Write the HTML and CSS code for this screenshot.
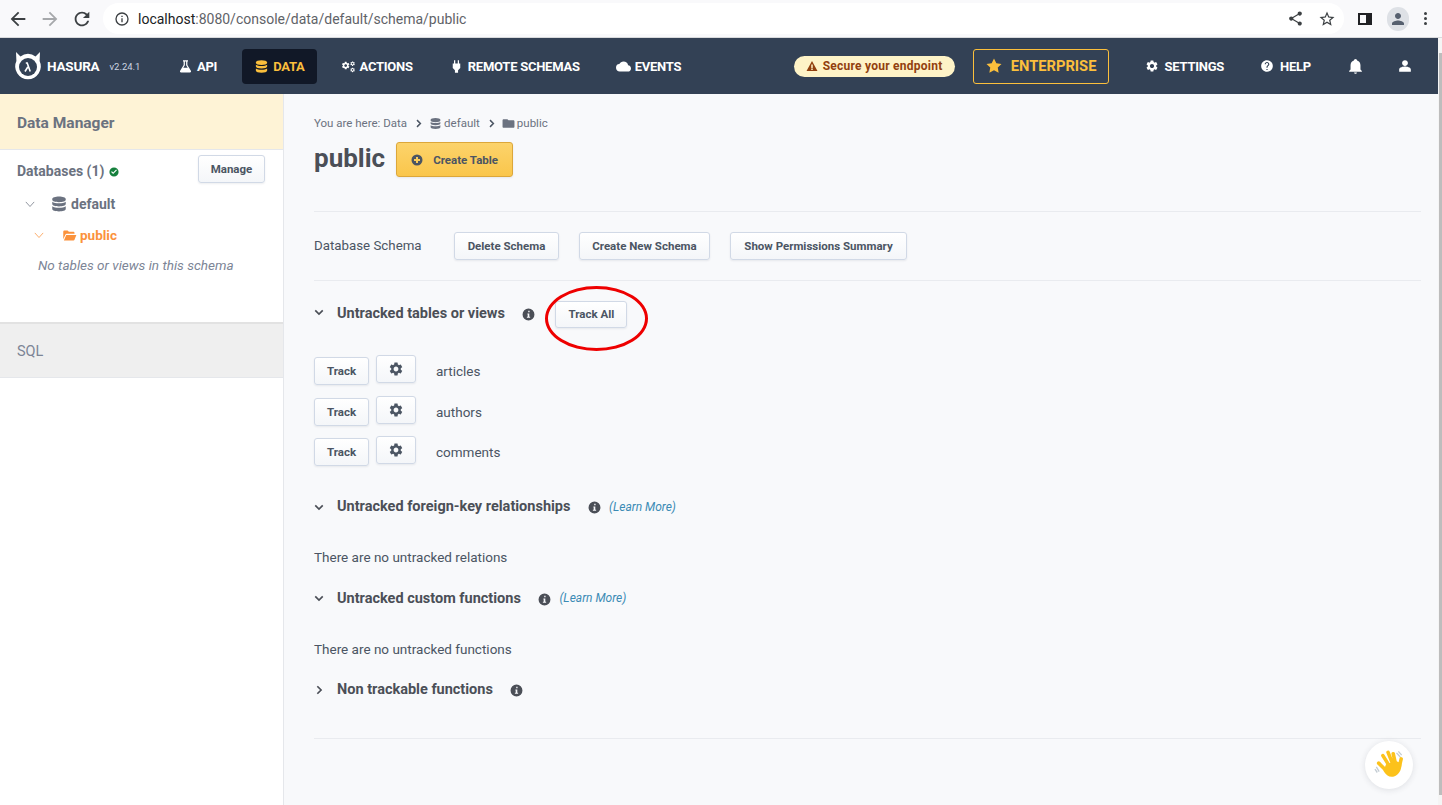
FILE: index.html
```html
<!DOCTYPE html>
<html lang="en">
<head>
    <meta charset="UTF-8">
    <title>Hasura Console</title>
    <link rel="stylesheet" href="styles.css">
</head>
<body>
    <svg class="sprites" width="0" height="0">
        <symbol id="i-db" viewBox="0 0 24 24"><path d="M12 2c-5 0-9 1.300-9 3.200v1.200C3 8.300 7 9.600 12 9.600s9-1.300 9-3.200V5.200C21 3.300 17 2 12 2zM3 9v3c0 1.900 4 3.200 9 3.200s9-1.300 9-3.200V9c-1.800 1.400-5.300 2-9 2s-7.200-.6-9-2zM3 15v3.800C3 20.700 7 22 12 22s9-1.300 9-3.200V15c-1.800 1.400-5.300 2-9 2s-7.200-.6-9-2z"/></symbol>
        <symbol id="i-gear" viewBox="0 0 24 24"><path d="M19.140 12.940c.040-.300.060-.610.060-.940 0-.320-.020-.640-.070-.940l2.030-1.580a.49.49 0 0 0 .120-.610l-1.920-3.320a.488.488 0 0 0-.590-.220l-2.390.960c-.5-.380-1.030-.7-1.620-.940l-.360-2.540a.484.484 0 0 0-.480-.410h-3.840c-.240 0-.430.170-.470.410l-.360 2.540c-.590.240-1.130.570-1.620.940l-2.390-.960c-.220-.080-.470 0-.590.220L2.740 8.870c-.120.210-.080.470.120.610l2.030 1.580c-.050.300-.090.630-.090.940s.020.640.070.940l-2.030 1.580a.49.49 0 0 0-.12.61l1.920 3.320c.120.220.370.290.590.220l2.390-.96c.5.38 1.030.7 1.620.94l.36 2.54c.05.24.24.41.48.41h3.840c.24 0 .44-.17.47-.41l.36-2.54c.59-.24 1.130-.56 1.620-.94l2.39.96c.22.08.47 0 .59-.22l1.920-3.320c.12-.22.07-.47-.12-.61l-2.010-1.580zM12 15.600c-1.980 0-3.600-1.620-3.600-3.600s1.620-3.600 3.600-3.600 3.600 1.620 3.600 3.600-1.620 3.600-3.600 3.600z"/></symbol>
        <symbol id="i-info" viewBox="0 0 24 24"><path fill-rule="evenodd" d="M12 1a11 11 0 1 0 0 22 11 11 0 0 0 0-22zm-2 9h3.500v6H15v2H9v-2h1.500v-4H10zm1.500-5h2.500v3h-2.500z"/></symbol>
        <symbol id="i-down" viewBox="0 0 24 24"><path d="M3 8l9 9 9-9" fill="none" stroke="currentColor" stroke-width="4"/></symbol>
        <symbol id="i-thin" viewBox="0 0 24 24"><path d="M2 7l10 11L22 7" fill="none" stroke="currentColor" stroke-width="1.800"/></symbol>
    </svg>

    <div class="browser-bar">
        <svg class="b-icon" viewBox="0 0 24 24"><path d="M20 11H7.830l5.590-5.590L12 4l-8 8 8 8 1.410-1.410L7.830 13H20z"/></svg>
        <svg class="b-icon b-off" viewBox="0 0 24 24"><path d="M4 11h12.170l-5.590-5.590L12 4l8 8-8 8-1.410-1.410L16.170 13H4z"/></svg>
        <svg class="b-icon" viewBox="0 0 24 24"><path d="M17.650 6.350A7.958 7.958 0 0 0 12 4c-4.420 0-7.990 3.580-7.990 8s3.570 8 7.990 8c3.730 0 6.840-2.550 7.730-6h-2.080A5.990 5.990 0 0 1 12 18c-3.310 0-6-2.690-6-6s2.690-6 6-6c1.660 0 3.140.690 4.220 1.780L13 11h7V4z"/></svg>
        <div class="url-box">
            <svg class="url-info" viewBox="0 0 24 24"><path fill-rule="evenodd" d="M12 2a10 10 0 1 0 0 20 10 10 0 0 0 0-20zm0 2a8 8 0 1 1 0 16 8 8 0 0 1 0-16zm-1 3h2v2h-2zm0 4h2v6h-2z"/></svg>
            <span class="url-host">localhost</span><span class="url-rest">:8080/console/data/default/schema/public</span>
            <svg class="url-end share" viewBox="0 0 24 24"><path d="M18 16.080c-.760 0-1.440.300-1.960.770L8.910 12.700c.050-.230.090-.460.090-.700s-.040-.470-.090-.700l7.050-4.110c.540.500 1.250.810 2.040.810 1.660 0 3-1.340 3-3s-1.340-3-3-3-3 1.340-3 3c0 .240.040.470.090.700L8.040 9.810C7.500 9.310 6.790 9 6 9c-1.660 0-3 1.340-3 3s1.340 3 3 3c.790 0 1.500-.310 2.040-.810l7.120 4.160c-.050.210-.080.430-.080.650 0 1.610 1.310 2.920 2.920 2.920s2.920-1.310 2.920-2.920-1.310-2.920-2.920-2.920z"/></svg>
            <svg class="url-end" viewBox="0 0 24 24"><path d="M22 9.240l-7.190-.620L12 2 9.190 8.630 2 9.240l5.460 4.730L5.820 21 12 17.270 18.180 21l-1.630-7.030L22 9.240zM12 15.400l-3.760 2.270 1-4.280-3.320-2.880 4.380-.380L12 6.100l1.710 4.040 4.380.380-3.320 2.880 1 4.280L12 15.400z"/></svg>
        </div>
        <svg class="side-panel" viewBox="0 0 16 16"><path fill-rule="evenodd" d="M1 2h14v12H1zm2 2v8h6V4z"/></svg>
        <div class="avatar"><svg viewBox="0 0 24 24"><path d="M12 12c2.200 0 4-1.800 4-4s-1.800-4-4-4-4 1.800-4 4 1.800 4 4 4zm0 2c-2.700 0-8 1.300-8 4v2h16v-2c0-2.700-5.300-4-8-4z"/></svg></div>
        <div class="dots"><span></span><span></span><span></span></div>
    </div>

    <div class="frame">
        <div class="app">
            <nav class="top-nav">
                <div class="brand">
                    <svg class="logo" viewBox="0 0 28 30">
                        <path d="M2 1l4.500 4.500a12 12 0 0 1 15 0L26 1l-.4 9a12.800 12.800 0 1 1-23.200 0z" fill="#fff"/>
                        <circle cx="14" cy="16" r="9" fill="#334155"/>
                        <path d="M11 20.500l2.800-4.500M11.800 12h1.400l3 8.500" fill="none" stroke="#fff" stroke-width="1.600"/>
                    </svg>
                    <span class="brand-name">HASURA</span>
                    <span class="brand-version">v2.24.1</span>
                </div>
                <a class="nav-item"><svg viewBox="0 0 24 24"><path d="M8 2h8v2h-1v5.500l5.600 9.300c.7 1.200-.1 2.700-1.500 2.700H4.900c-1.400 0-2.200-1.500-1.500-2.700L9 9.500V4H8zm3 2v6l-2.500 4h7L13 10V4z" fill-rule="evenodd"/></svg>API</a>
                <a class="nav-item active"><svg viewBox="0 0 24 24"><use href="#i-db"/></svg>DATA</a>
                <a class="nav-item"><svg viewBox="0 0 24 24"><use href="#i-gear" x="0" y="3" width="15" height="15"/><use href="#i-gear" x="14" y="3" width="9" height="9"/><use href="#i-gear" x="14" y="13" width="9" height="9"/></svg>ACTIONS</a>
                <a class="nav-item"><svg viewBox="0 0 24 24"><path d="M16 7V2h-2v5h-4V2H8v5H6v7.500L9.500 18v4h5v-4l3.500-3.500V7z"/></svg>REMOTE SCHEMAS</a>
                <a class="nav-item"><svg viewBox="0 0 24 24"><path d="M19.350 10.040A7.490 7.490 0 0 0 12 4C9.110 4 6.600 5.640 5.350 8.040A5.994 5.994 0 0 0 0 14c0 3.310 2.690 6 6 6h13c2.760 0 5-2.240 5-5 0-2.640-2.050-4.780-4.650-4.960z"/></svg>EVENTS</a>

                <div class="nav-right">
                    <div class="secure-pill">
                        <svg viewBox="0 0 24 24"><path fill-rule="evenodd" d="M12 2L1 22h22zm-1.500 7h3v7h-3zm0 8h3v3h-3z"/></svg>
                        Secure your endpoint
                    </div>
                    <a class="enterprise"><svg viewBox="0 0 24 24"><path d="M12 2l3.090 6.260L22 9.270l-5 4.870 1.180 6.880L12 17.770l-6.180 3.250L7 14.140 2 9.270l6.910-1.010z"/></svg>ENTERPRISE</a>
                    <a class="nav-link settings"><svg viewBox="0 0 24 24"><use href="#i-gear"/></svg>SETTINGS</a>
                    <a class="nav-link help"><svg viewBox="0 0 24 24"><path d="M12 2C6.480 2 2 6.480 2 12s4.480 10 10 10 10-4.480 10-10S17.520 2 12 2zm1 17h-2v-2h2v2zm2.070-7.750l-.9.920C13.450 12.900 13 13.500 13 15h-2v-.5c0-1.100.450-2.100 1.170-2.830l1.240-1.260c.370-.360.590-.860.590-1.410 0-1.100-.9-2-2-2s-2 .9-2 2H8c0-2.210 1.790-4 4-4s4 1.790 4 4c0 .880-.360 1.680-.930 2.250z"/></svg>HELP</a>
                    <svg class="bell" viewBox="0 0 24 24"><path d="M12 23c1.100 0 2-.9 2-2h-4c0 1.100.9 2 2 2zm7-6v-6c0-3.070-1.630-5.640-4.500-6.320V4c0-.830-1.670-2-2.500-2s-2.500 1.170-2.500 2v.680C6.640 5.360 5 7.920 5 11v6l-2 2v1h18v-1z"/></svg>
                    <svg class="user" viewBox="0 0 24 24"><path d="M12 12c2.800 0 5-2.200 5-5s-2.200-5-5-5-5 2.200-5 5 2.200 5 5 5zm0 1c-3 0-10 1.300-10 5v4h20v-4c0-3.700-7-5-10-5z"/></svg>
                </div>
            </nav>

            <div class="page">
                <aside class="sidebar">
                    <div class="side-head">Data Manager</div>
                    <div class="side-body">
                        <div class="db-row">
                            <span class="db-title">Databases (1)</span>
                            <svg class="ok-icon" viewBox="0 0 24 24"><path fill-rule="evenodd" d="M12 1a11 11 0 1 0 0 22 11 11 0 0 0 0-22zm-2 16l-5-5 2-2 3 3 7-7 2 2z"/></svg>
                            <button class="btn btn-manage">Manage</button>
                        </div>
                        <div class="tree-row tree-default">
                            <svg class="thin" viewBox="0 0 24 24"><use href="#i-thin"/></svg>
                            <svg class="db-icon" viewBox="0 0 24 24"><use href="#i-db"/></svg>
                            default
                        </div>
                        <div class="tree-row tree-public">
                            <svg class="thin" viewBox="0 0 24 24"><use href="#i-thin"/></svg>
                            <svg class="folder" viewBox="0 0 24 24"><path d="M2 18V6c0-1.100.9-2 2-2h5l2 2h7c1.100 0 2 .9 2 2v1H7.500c-.9 0-1.600.5-1.900 1.300zM6.800 11H23l-3.200 8.200c-.2.5-.7.8-1.300.8H3z"/></svg>
                            public
                        </div>
                        <div class="tree-empty">No tables or views in this schema</div>
                    </div>
                    <div class="side-sql">SQL</div>
                </aside>

                <main class="content">
                    <div class="crumbs">
                        You are here: Data
                        <svg class="crumb-sep" viewBox="0 0 24 24"><use href="#i-down"/></svg>
                        <svg class="crumb-icon" viewBox="0 0 24 24"><use href="#i-db"/></svg>
                        default
                        <svg class="crumb-sep" viewBox="0 0 24 24"><use href="#i-down"/></svg>
                        <svg class="crumb-icon" viewBox="0 0 24 24"><path d="M10 4H3c-1.100 0-2 .9-2 2v12c0 1.100.9 2 2 2h18c1.100 0 2-.9 2-2V8c0-1.100-.9-2-2-2h-9z"/></svg>
                        public
                    </div>
                    <div class="title-row">
                        <h1>public</h1>
                        <button class="btn btn-create">
                            <svg viewBox="0 0 24 24"><path fill-rule="evenodd" d="M12 1a11 11 0 1 0 0 22 11 11 0 0 0 0-22zm-2 5h4v4h4v4h-4v4h-4v-4H6v-4h4z"/></svg>
                            Create Table
                        </button>
                    </div>
                    <hr class="rule rule-top">
                    <div class="schema-row">
                        <span class="schema-label">Database Schema</span>
                        <button class="btn btn-delete">Delete Schema</button>
                        <button class="btn btn-new">Create New Schema</button>
                        <button class="btn btn-perm">Show Permissions Summary</button>
                    </div>
                    <hr class="rule rule-mid">

                    <div class="section-head first">
                        <svg class="chev" viewBox="0 0 24 24"><use href="#i-down"/></svg>
                        <h2>Untracked tables or views</h2>
                        <svg class="info" viewBox="0 0 24 24"><use href="#i-info"/></svg>
                        <span class="track-all-wrap">
                            <button class="btn btn-track-all">Track All</button>
                            <span class="red-circle"></span>
                        </span>
                    </div>
                    <div class="table-list">
                        <div class="table-row">
                            <button class="btn btn-track">Track</button>
                            <button class="btn btn-gear"><svg viewBox="0 0 24 24"><use href="#i-gear"/></svg></button>
                            <span class="table-name">articles</span>
                        </div>
                        <div class="table-row">
                            <button class="btn btn-track">Track</button>
                            <button class="btn btn-gear"><svg viewBox="0 0 24 24"><use href="#i-gear"/></svg></button>
                            <span class="table-name">authors</span>
                        </div>
                        <div class="table-row">
                            <button class="btn btn-track">Track</button>
                            <button class="btn btn-gear"><svg viewBox="0 0 24 24"><use href="#i-gear"/></svg></button>
                            <span class="table-name">comments</span>
                        </div>
                    </div>

                    <div class="section-head fk">
                        <svg class="chev" viewBox="0 0 24 24"><use href="#i-down"/></svg>
                        <h2>Untracked foreign-key relationships</h2>
                        <svg class="info" viewBox="0 0 24 24"><use href="#i-info"/></svg>
                        <a class="learn">(Learn More)</a>
                    </div>
                    <p class="none-text">There are no untracked relations</p>

                    <div class="section-head">
                        <svg class="chev" viewBox="0 0 24 24"><use href="#i-down"/></svg>
                        <h2>Untracked custom functions</h2>
                        <svg class="info" viewBox="0 0 24 24"><use href="#i-info"/></svg>
                        <a class="learn">(Learn More)</a>
                    </div>
                    <p class="none-text">There are no untracked functions</p>

                    <div class="section-head">
                        <svg class="chev chev-right" viewBox="0 0 24 24"><use href="#i-down"/></svg>
                        <h2>Non trackable functions</h2>
                        <svg class="info" viewBox="0 0 24 24"><use href="#i-info"/></svg>
                    </div>
                    <hr class="rule rule-end">
                </main>
            </div>
        </div>
        <div class="scroll-track"><div class="scroll-thumb"></div></div>
    </div>

    <div class="wave-btn">
        <svg viewBox="0 0 32 32">
            <path d="M2.500 18l3 5M1 20.500l2.500 3.500M24 3l4 4.500M26 1.500l3.500 4" fill="none" stroke="#c3ccd3" stroke-width="1.400"/>
            <path d="M5 14l9 9M9.500 6l7.500 12M15 2.500l5 12.500M20.500 4l2.500 11M29 9.500l-2 8.500" fill="none" stroke="#fcc21b" stroke-width="3.800" stroke-linecap="round"/>
            <path d="M13 15l11-3 5 2c1 6-2 12-7 14-5 2-9-1-12-6z" fill="#fcc21b"/>
        </svg>
    </div>
</body>
</html>
```

FILE: styles.css
```css
* {
    box-sizing: border-box;
}
html, body {
    height: 100%;
}
body {
    margin: 0;
    height: 805px;
    overflow: hidden;
    display: flex;
    flex-direction: column;
    font-family: Roboto, Arial, sans-serif;
    font-size: 14px;
    color: #4b5563;
    background: #fff;
}
.sprites {
    position: absolute;
}
svg {
    fill: currentColor;
    flex: none;
    display: block;
}

/* browser chrome */
.browser-bar {
    height: 38px;
    flex: none;
    display: flex;
    align-items: center;
    padding: 3px 0 3px 7px;
    background: #f9f9fb;
    border-bottom: 1px solid #d9dadc;
}
.b-icon {
    width: 22px;
    height: 22px;
    margin-right: 10px;
    color: #3c4043;
}
.b-off {
    color: #a6a8ab;
}
.url-box {
    width: 1241px;
    height: 31px;
    border-radius: 16px;
    background: #fff;
    display: flex;
    align-items: center;
    padding: 0 8px 0 11px;
    font-size: 14px;
}
.url-info {
    width: 16px;
    height: 16px;
    margin-right: 8px;
    color: #3c4043;
}
.url-host {
    color: #202124;
}
.url-rest {
    color: #5f6368;
}
.url-end {
    width: 18px;
    height: 18px;
    color: #3c4043;
}
.share {
    margin-left: auto;
    margin-right: 14px;
    width: 17px;
    height: 17px;
}
.side-panel {
    width: 16px;
    height: 16px;
    margin-left: 13px;
    color: #202124;
}
.avatar {
    width: 22px;
    height: 24px;
    margin-left: 14px;
    border-radius: 11px;
    background: #dee1e6;
    display: flex;
    align-items: center;
    justify-content: center;
    color: #56606f;
}
.avatar svg {
    width: 18px;
    height: 18px;
}
.dots {
    margin-left: 15px;
    display: flex;
    flex-direction: column;
    gap: 2px;
}
.dots span {
    width: 3px;
    height: 3px;
    border-radius: 50%;
    background: #3c4043;
}

/* app frame with its scrollbar */
.frame {
    flex: 1;
    display: flex;
    min-height: 0;
}
.app {
    flex: 1;
    min-width: 0;
    display: flex;
    flex-direction: column;
}
.scroll-track {
    width: 4px;
    flex: none;
    padding: 15px 0 10px 1px;
    background: #f5f5f5;
}
.scroll-thumb {
    height: 100%;
    background: #bdbdbd;
}

/* top navigation */
.top-nav {
    height: 56px;
    flex: none;
    display: flex;
    align-items: center;
    gap: 12px;
    padding-left: 14px;
    padding-right: 26px;
    background: #334155;
    color: #fff;
}
.brand {
    width: 140px;
    display: flex;
    align-items: center;
}
.logo {
    width: 28px;
    height: 30px;
}
.brand-name {
    margin-left: 5px;
    font-size: 13.500px;
    font-weight: 700;
    letter-spacing: -.2px;
}
.brand-version {
    margin-left: 10px;
    font-size: 9.500px;
    color: #cbd5e1;
}
.nav-item {
    height: 35px;
    display: flex;
    align-items: center;
    gap: 4px;
    padding: 0 12px;
    border-radius: 4px;
    font-size: 13px;
    font-weight: 700;
    letter-spacing: -.25px;
}
.nav-item svg {
    width: 15px;
    height: 15px;
}
.nav-item.active {
    margin-left: 1px;
    background: #111827;
    color: #fbbf3c;
}
.nav-right {
    margin-left: auto;
    display: flex;
    align-items: center;
}
.secure-pill {
    width: 161px;
    height: 21px;
    display: flex;
    align-items: center;
    justify-content: center;
    gap: 5px;
    border-radius: 11px;
    background: #fef3c7;
    color: #92400e;
    font-size: 12px;
    font-weight: 700;
    letter-spacing: .25px;
}
.secure-pill svg {
    width: 12px;
    height: 12px;
}
.enterprise {
    margin-left: 18px;
    width: 136px;
    height: 35px;
    display: flex;
    align-items: center;
    justify-content: center;
    gap: 8px;
    border: 1px solid #fbbf3c;
    border-radius: 3px;
    color: #fbbf3c;
    font-size: 14.700px;
    font-weight: 700;
}
.enterprise svg {
    width: 18px;
    height: 18px;
}
.nav-link {
    display: flex;
    align-items: center;
    gap: 6px;
    font-size: 13px;
    font-weight: 700;
    letter-spacing: -.25px;
}
.nav-link svg {
    width: 14px;
    height: 14px;
}
.settings {
    margin-left: 36px;
}
.help {
    margin-left: 36px;
}
.bell {
    margin-left: 36px;
    width: 17px;
    height: 18px;
}
.user {
    margin-left: 34px;
    width: 14px;
    height: 14px;
}

/* page */
.page {
    flex: 1;
    display: flex;
    min-height: 0;
}
.sidebar {
    width: 284px;
    flex: none;
    border-right: 1px solid #e5e7eb;
    background: #fff;
}
.side-head {
    height: 56px;
    padding: 2px 17px 0;
    display: flex;
    align-items: center;
    background: #fef3d6;
    border-bottom: 1px solid #e5e7eb;
    font-size: 15.500px;
    font-weight: 700;
    color: #6b7280;
}
.side-body {
    height: 172px;
    padding: 5px 18px 0 17px;
}
.db-row {
    height: 28px;
    display: flex;
    align-items: center;
}
.db-title {
    font-weight: 700;
    color: #6b7280;
    margin-top: 4px;
}
.ok-icon {
    width: 10px;
    height: 10px;
    margin: 5px 0 0 5px;
    color: #15803d;
}
.btn {
    height: 28px;
    padding: 0;
    border: 1px solid #d1d9e6;
    border-radius: 3px;
    background: linear-gradient(#fff, #f4f6f9);
    box-shadow: 0 1px 2px rgba(30, 41, 59, .08);
    color: #4b5563;
    font-family: inherit;
    font-size: 11.500px;
    font-weight: 700;
}
.btn-manage {
    margin-left: auto;
    width: 67px;
}
.tree-row {
    display: flex;
    align-items: center;
    font-weight: 700;
}
.tree-row .thin {
    width: 10px;
    height: 10px;
}
.tree-default {
    height: 24px;
    margin-top: 9px;
    padding-left: 8px;
    color: #6b7280;
}
.db-icon {
    width: 18px;
    height: 18px;
    margin: 0 3px 0 15px;
}
.tree-public {
    height: 24px;
    margin-top: 7px;
    padding-left: 17px;
    color: #fb923c;
    font-size: 13.500px;
}
.folder {
    width: 15px;
    height: 15px;
    margin: 0 3px 0 18px;
}
.tree-empty {
    margin: 10px 0 0 21px;
    font-size: 13.500px;
    font-style: italic;
    color: #7c8596;
}
.side-sql {
    height: 56px;
    padding: 1px 17px 0;
    display: flex;
    align-items: center;
    background: #efefef;
    border-top: 2px solid #e2e2e2;
    border-bottom: 1px solid #e5e7eb;
    font-size: 14.500px;
    color: #7c8596;
}

/* main content */
.content {
    flex: 1;
    padding: 20px 17px 0 30px;
    background: #f8f9fb;
}
.crumbs {
    height: 18px;
    display: flex;
    align-items: center;
    font-size: 11.500px;
    color: #6b7280;
}
.crumb-sep {
    width: 9px;
    height: 9px;
    margin: 0 6px 0 7px;
    transform: rotate(-90deg);
    color: #4b5563;
}
.crumb-icon {
    width: 13px;
    height: 13px;
    margin-right: 2px;
}
.title-row {
    display: flex;
    align-items: center;
    margin-top: 10px;
}
h1 {
    margin: -2px 0 0;
    font-size: 26px;
    line-height: 35px;
    font-weight: 700;
    color: #4b4f57;
}
.btn-create {
    margin-left: 11px;
    width: 117px;
    height: 35px;
    display: flex;
    align-items: center;
    justify-content: center;
    gap: 10px;
    border-color: #dca73a;
    background: linear-gradient(#fcd36b, #fac64b);
}
.btn-create svg {
    width: 12px;
    height: 12px;
}
.rule {
    margin: 0;
    border: 0;
    border-top: 1px solid #e9ebef;
}
.rule-top {
    margin-top: 34px;
}
.schema-row {
    display: flex;
    align-items: center;
    height: 28px;
    margin-top: 20px;
}
.schema-label {
    width: 140px;
    margin-top: -2px;
    font-size: 13.300px;
}
.btn-delete {
    width: 105px;
}
.btn-new {
    width: 131px;
    margin-left: 20px;
}
.btn-perm {
    width: 177px;
    margin-left: 20px;
}
.rule-mid {
    margin-top: 20px;
}
.section-head {
    display: flex;
    align-items: center;
    height: 24px;
    margin-top: 19px;
}
.section-head.first {
    margin-top: 20px;
}
.section-head.fk {
    margin-top: 18px;
}
h2 {
    margin: 0;
    font-size: 14.500px;
    font-weight: 700;
    color: #4b4f57;
}
.first h2 {
    margin-top: 1px;
}
.chev {
    width: 10px;
    height: 10px;
    margin-right: 13px;
    color: #4b4f57;
}
.first .chev {
    margin-top: -3px;
}
.chev-right {
    transform: rotate(-90deg);
}
.info {
    width: 13px;
    height: 13px;
    margin: 2px 0 0 17.500px;
    color: #4b4f57;
}
.learn {
    margin-left: 8px;
    font-size: 12px;
    font-style: italic;
    color: #3b8bb5;
}
.track-all-wrap {
    position: relative;
    margin: 2px 0 0 20px;
}
.btn-track-all {
    display: block;
    width: 72px;
    height: 27px;
}
.red-circle {
    position: absolute;
    left: -10px;
    top: -15px;
    width: 103px;
    height: 65px;
    border: 3px solid #ee0000;
    border-radius: 50%;
}
.table-list {
    margin-top: 30px;
}
.table-row {
    display: flex;
    height: 40.500px;
}
.btn-track {
    width: 55px;
    margin-top: 2.300px;
}
.btn-gear {
    width: 40px;
    margin-left: 7px;
    display: flex;
    align-items: center;
    justify-content: center;
}
.btn-gear svg {
    width: 16px;
    height: 16px;
    color: #4b5563;
}
.table-name {
    margin-left: 20px;
    line-height: 32px;
    font-size: 13.500px;
}
.none-text {
    margin: 28.500px 0 0;
    height: 20px;
    line-height: 20px;
    font-size: 13.500px;
}
.rule-end {
    margin-top: 36px;
}

.wave-btn {
    position: absolute;
    left: 1365px;
    top: 741px;
    width: 48px;
    height: 48px;
    border-radius: 50%;
    background: #fff;
    box-shadow: 0 1px 6px rgba(30, 41, 59, .12);
    display: flex;
    align-items: center;
    justify-content: center;
}
.wave-btn svg {
    width: 30px;
    height: 30px;
}
```
